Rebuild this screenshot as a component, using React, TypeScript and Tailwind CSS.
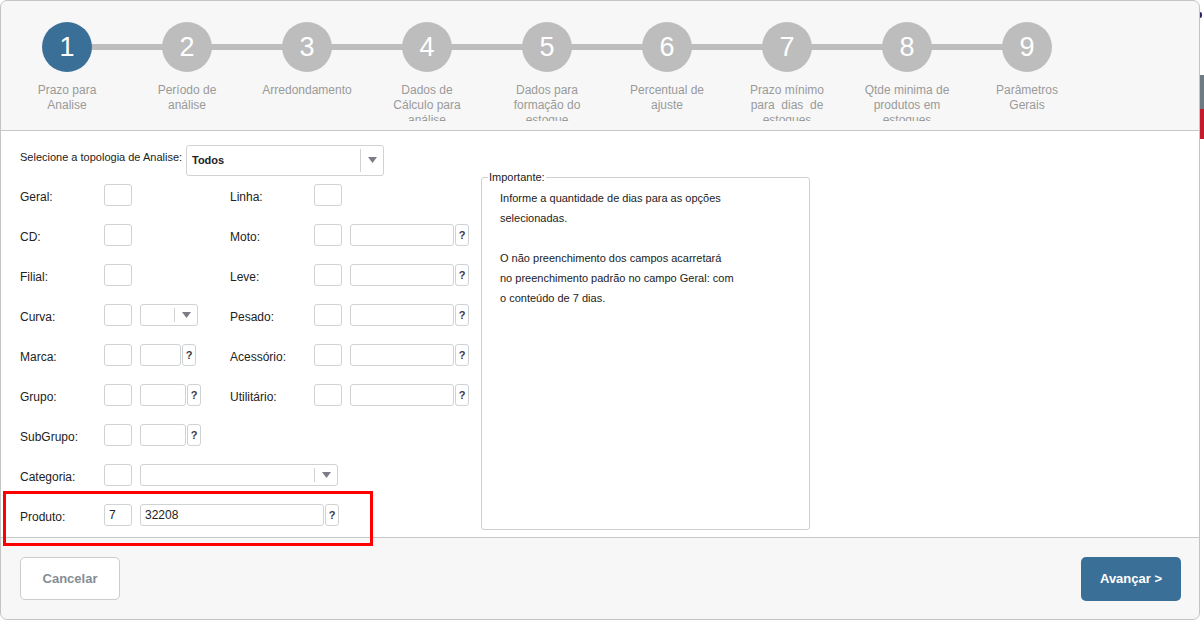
import React from 'react';

const steps = [
  'Prazo para Analise',
  'Período de análise',
  'Arredondamento',
  'Dados de Cálculo para análise',
  'Dados para formação do estoque',
  'Percentual de ajuste',
  'Prazo mínimo para\u00a0 dias\u00a0 de estoques',
  'Qtde minima de produtos em estoques',
  'Parâmetros Gerais',
];

const Box: React.FC<{ w: string; value?: string }> = ({ w, value }) => (
  <div className={`${w} h-[22px] border border-[#cfd3d4] rounded-[3px] bg-white px-[4px] flex items-center text-[12px] text-[#222]`}>
    {value}
  </div>
);

const Help: React.FC = () => (
  <div className="w-[14px] h-[22px] ml-[1px] border border-[#cfd3d4] rounded-[3px] bg-white flex items-center justify-center text-[11px] font-bold text-[#3a3a4a]">
    ?
  </div>
);

const Arrow: React.FC = () => (
  <svg width="9" height="6" viewBox="0 0 9 6">
    <path d="M0 0 L9 0 L4.5 6 Z" fill="#7a7d85" />
  </svg>
);

const Select: React.FC<{ w: string; value?: string; h?: string; bold?: boolean }> = ({ w, value, h = 'h-[22px]', bold }) => (
  <div className={`${w} ${h} border border-[#cfd3d4] rounded-[3px] bg-white flex items-stretch`}>
    <div className={`flex-1 flex items-center px-[5px] text-[#222] ${bold ? 'font-bold text-[11px]' : 'text-[12px]'}`}>{value}</div>
    <div className="w-[23px] border-l border-[#cfd3d4] my-[3px] flex items-center justify-center">
      <Arrow />
    </div>
  </div>
);

const Label: React.FC<{ children: React.ReactNode }> = ({ children }) => (
  <div className="w-[84px] shrink-0 text-[12px] text-[#222] pt-[3px]">{children}</div>
);

const Row: React.FC<{ left: React.ReactNode; right?: React.ReactNode }> = ({ left, right }) => (
  <div className="h-[40px] flex items-center">
    <div className="w-[210px] flex items-center shrink-0">{left}</div>
    {right && <div className="flex items-center">{right}</div>}
  </div>
);

export default function App() {
  return (
    <div className="flex bg-white w-[1204px] h-[625px]" style={{ fontFamily: '"Liberation Sans", Arial, sans-serif' }}>
      <div className="relative w-[1200px] h-[620px] shrink-0 border border-[#c4c4c4] rounded-[7px] bg-[#f7f7f7] flex flex-col overflow-hidden">
        {/* stepper */}
        <div className="relative h-[130px] shrink-0 border-b border-[#c8c8c8] pt-[21px] pl-[6px]">
          <div className="absolute left-[66px] top-[43px] w-[960px] h-[6px] bg-[#bdbdbd]" />
          <div className="flex">
            {steps.map((s, i) => (
              <div key={i} className="w-[120px] flex flex-col items-center">
                <div
                  className={`relative z-10 w-[50px] h-[50px] rounded-full flex items-center justify-center text-white text-[27px] ${
                    i === 0 ? 'bg-[#3a7097]' : 'bg-[#bdbdbd]'
                  }`}
                >
                  {i + 1}
                </div>
                <div className="mt-[11px] w-[92px] h-[38px] overflow-hidden text-center text-[12px] leading-[15px] text-[#9a9a9a]">
                  {s}
                </div>
              </div>
            ))}
          </div>
        </div>

        {/* body */}
        <div className="h-[407px] shrink-0 bg-white border-b border-[#c8c8c8] flex">
          <div className="pl-[19px] pt-[14px] w-[467px] shrink-0">
            <div className="flex items-center h-[30px]">
              <div className="w-[166px] shrink-0 whitespace-nowrap text-[11px] text-[#222] -mt-[5px]">Selecione a topologia de Analise:</div>
              <Select w="w-[198px]" h="h-[31px]" value="Todos" bold />
            </div>
            <Row
              left={<><Label>Geral:</Label><Box w="w-[28px]" /></>}
              right={<><Label>Linha:</Label><Box w="w-[28px]" /></>}
            />
            <Row
              left={<><Label>CD:</Label><Box w="w-[28px]" /></>}
              right={<><Label>Moto:</Label><Box w="w-[28px]" /><div className="w-[8px]" /><Box w="w-[104px]" /><Help /></>}
            />
            <Row
              left={<><Label>Filial:</Label><Box w="w-[28px]" /></>}
              right={<><Label>Leve:</Label><Box w="w-[28px]" /><div className="w-[8px]" /><Box w="w-[104px]" /><Help /></>}
            />
            <Row
              left={<><Label>Curva:</Label><Box w="w-[28px]" /><div className="w-[8px]" /><Select w="w-[58px]" /></>}
              right={<><Label>Pesado:</Label><Box w="w-[28px]" /><div className="w-[8px]" /><Box w="w-[104px]" /><Help /></>}
            />
            <Row
              left={<><Label>Marca:</Label><Box w="w-[28px]" /><div className="w-[8px]" /><Box w="w-[41px]" /><Help /></>}
              right={<><Label>Acessório:</Label><Box w="w-[28px]" /><div className="w-[8px]" /><Box w="w-[104px]" /><Help /></>}
            />
            <Row
              left={<><Label>Grupo:</Label><Box w="w-[28px]" /><div className="w-[8px]" /><Box w="w-[46px]" /><Help /></>}
              right={<><Label>Utilitário:</Label><Box w="w-[28px]" /><div className="w-[8px]" /><Box w="w-[104px]" /><Help /></>}
            />
            <Row left={<><Label>SubGrupo:</Label><Box w="w-[28px]" /><div className="w-[8px]" /><Box w="w-[46px]" /><Help /></>} />
            <div className="h-[40px] flex items-center">
              <Label>Categoria:</Label><Box w="w-[28px]" /><div className="w-[8px]" /><Select w="w-[198px]" />
            </div>
            <div className="h-[40px] flex items-center">
              <Label>Produto:</Label><Box w="w-[28px]" value="7" /><div className="w-[8px]" /><Box w="w-[184px]" value="32208" /><Help />
            </div>
          </div>

          <fieldset className="ml-[13px] mt-[39px] w-[329px] h-[360px] border border-[#cfcfcf] rounded-[3px] px-[6px] pt-[4px]">
            <legend className="ml-[0px] px-[1px] text-[11px] text-[#222] leading-[14px]">Importante:</legend>
            <div className="pl-[12px] text-[11px] leading-[20px] text-[#222]">
              <p>Informe a quantidade de dias para as opções</p>
              <p>selecionadas.</p>
              <p>&nbsp;</p>
              <p>O não preenchimento dos campos acarretará</p>
              <p>no preenchimento padrão no campo Geral: com</p>
              <p>o conteúdo de 7 dias.</p>
            </div>
          </fieldset>
        </div>

        {/* footer */}
        <div className="flex-1 flex justify-between items-start pt-[19px] pl-[19px] pr-[18px]">
          <button className="w-[100px] h-[43px] bg-white border border-[#cccccc] rounded-[5px] text-[13px] font-bold text-[#858d94]">
            Cancelar
          </button>
          <button className="w-[100px] h-[44px] bg-[#3a7097] rounded-[5px] text-[13px] font-bold text-white">
            Avançar &gt;
          </button>
        </div>

        {/* annotation */}
        <div className="absolute left-[2px] top-[490px] w-[370px] h-[55px] border-[3px] border-[#ff0000]" />
      </div>

      <div className="w-[4px] flex flex-col">
        <div className="mt-[12px] h-[6px] w-[2px] bg-[#2a2a6a] rounded-r-full" />
        <div className="mt-[57px] h-[34px] bg-[#6e7b83]" />
        <div className="h-[30px] bg-[#c41a2c]" />
      </div>
    </div>
  );
}
